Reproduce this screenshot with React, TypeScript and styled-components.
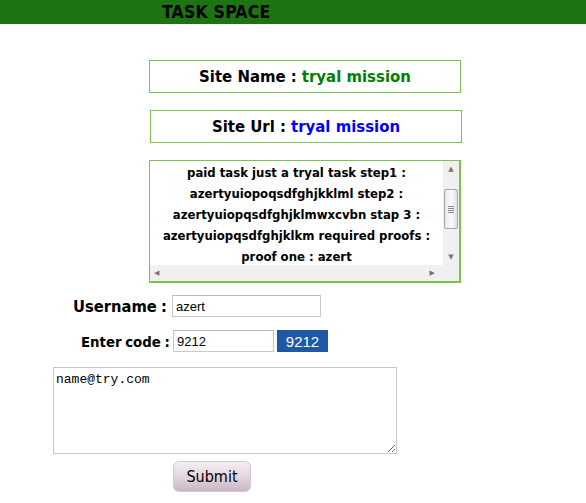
import styled, { createGlobalStyle } from "styled-components";

const GlobalStyle = createGlobalStyle`
  body {
    margin: 0;
    background: #ffffff;
    font-family: "DejaVu Sans", Verdana, sans-serif;
  }
`;

const Header = styled.div`
  height: 24px;
  background: #1c7510;
  padding-left: 162px;
  display: flex;
  align-items: center;
`;

const Title = styled.h1`
  margin: 0;
  font-family: "DejaVu Sans Condensed", "DejaVu Sans", sans-serif;
  font-size: 17.5px;
  font-weight: bold;
  color: #000;
  letter-spacing: 0.2px;
`;

const Main = styled.div`
  display: flex;
  flex-direction: column;
  align-items: flex-start;
  padding-top: 36px;
`;

const InfoBox = styled.div<{ $left: number; $gap: number }>`
  margin-left: ${(p) => p.$left}px;
  margin-bottom: ${(p) => p.$gap}px;
  width: 310px;
  height: 31px;
  border: 1px solid #7dc24a;
  display: flex;
  align-items: center;
  justify-content: center;
  font-family: "DejaVu Sans Condensed", "DejaVu Sans", sans-serif;
  font-size: 16.6px;
  font-weight: bold;
  color: #000;
`;

const Value = styled.span<{ $color: string }>`
  color: ${(p) => p.$color};
  margin-left: 5px;
`;

const ScrollBox = styled.div`
  margin-left: 149px;
  width: 309px;
  height: 120px;
  border: 2px solid #7dc24a;
  border-width: 1px 2px 2px 1px;
  display: grid;
  grid-template-columns: 1fr 16px;
  grid-template-rows: 1fr 16px;
  margin-bottom: 12px;
`;

const ScrollText = styled.div`
  overflow: hidden;
  text-align: center;
  font-family: "DejaVu Sans Condensed", "DejaVu Sans", sans-serif;
  font-size: 13px;
  font-weight: bold;
  line-height: 21px;
  padding-top: 1px;
  color: #000;
`;

const VBar = styled.div`
  background: #f0f0f0;
  display: flex;
  flex-direction: column;
  align-items: center;
`;

const HBar = styled.div`
  background: #f0f0f0;
  display: flex;
  align-items: center;
  justify-content: space-between;
  padding: 0 8px 0 4px;
`;

const Corner = styled.div`
  background: #f0f0f0;
`;

const Arrow = styled.div`
  height: 16px;
  display: flex;
  align-items: center;
  justify-content: center;
  color: #777;
  font-size: 7px;
`;

const Thumb = styled.div`
  margin-top: 12px;
  width: 12px;
  height: 38px;
  border: 1px solid #a7a7a7;
  border-radius: 2px;
  background: linear-gradient(to right, #e8e8e8, #fafafa 50%, #e0e0e0);
  display: flex;
  flex-direction: column;
  align-items: center;
  justify-content: center;
  gap: 1px;
  margin-bottom: auto;
`;

const Grip = styled.span`
  display: block;
  width: 6px;
  height: 1px;
  background: #8a8a8a;
`;

const FormRow = styled.div<{ $left: number }>`
  display: flex;
  align-items: center;
  margin-left: ${(p) => p.$left}px;
  margin-bottom: 13px;
`;

const Label = styled.label<{ $w: number; $size: number }>`
  width: ${(p) => p.$w}px;
  white-space: nowrap;
  font-family: "DejaVu Sans Condensed", "DejaVu Sans", sans-serif;
  font-size: ${(p) => p.$size}px;
  word-spacing: -1px;
  font-weight: bold;
  color: #000;
`;

const TextInput = styled.input<{ $w: number }>`
  width: ${(p) => p.$w}px;
  height: 22px;
  box-sizing: border-box;
  border: 1px solid #c9c9c9;
  border-top-color: #b8b8b8;
  padding: 0 3px;
  font-family: "Liberation Sans", Arial, sans-serif;
  font-size: 13px;
  color: #000;
  outline: none;
`;

const Captcha = styled.div`
  margin-left: 3px;
  width: 51px;
  height: 22px;
  background: #1f58a4;
  color: #fff;
  font-family: "Liberation Sans", Arial, sans-serif;
  font-size: 15px;
  display: flex;
  align-items: center;
  justify-content: center;
`;

const Message = styled.textarea`
  margin-left: 53px;
  margin-top: 2px;
  width: 344px;
  height: 87px;
  box-sizing: border-box;
  border: 1px solid #c8c8c8;
  padding: 4px 2px;
  font-family: "Liberation Mono", "Courier New", monospace;
  font-size: 13px;
  color: #000;
  outline: none;
`;

const SubmitButton = styled.button`
  margin-left: 173px;
  margin-top: 7px;
  width: 78px;
  height: 31px;
  border: 1px solid #d9c6d5;
  border-radius: 6px;
  background: linear-gradient(to bottom, #f3eef2, #e2d6df 50%, #c9b6c5);
  font-family: "DejaVu Sans Condensed", "DejaVu Sans", sans-serif;
  font-size: 16px;
  color: #000;
`;

const steps = [
  "paid task just a tryal task step1 :",
  "azertyuiopoqsdfghjkklml step2 :",
  "azertyuiopqsdfghjklmwxcvbn stap 3 :",
  "azertyuiopqsdfghjklkm required proofs :",
  "proof one : azert",
];

export default function App() {
  return (
    <>
      <GlobalStyle />
      <Header>
        <Title>TASK SPACE</Title>
      </Header>
      <Main>
        <InfoBox $left={149} $gap={17}>
          Site Name :<Value $color="#008000">tryal mission</Value>
        </InfoBox>
        <InfoBox $left={150} $gap={17}>
          Site Url :<Value $color="#0000ff">tryal mission</Value>
        </InfoBox>
        <ScrollBox>
          <ScrollText>
            {steps.map((s) => (
              <div key={s}>{s}</div>
            ))}
          </ScrollText>
          <VBar>
            <Arrow>▲</Arrow>
            <Thumb>
              <Grip />
              <Grip />
              <Grip />
              <Grip />
            </Thumb>
            <Arrow>▼</Arrow>
          </VBar>
          <HBar>
            <Arrow>◀</Arrow>
            <Arrow>▶</Arrow>
          </HBar>
          <Corner />
        </ScrollBox>
        <FormRow $left={73}>
          <Label $w={99} $size={16.4}>Username :</Label>
          <TextInput $w={149} defaultValue="azert" />
        </FormRow>
        <FormRow $left={81}>
          <Label $w={92} $size={14.8}>Enter code :</Label>
          <TextInput $w={101} defaultValue="9212" />
          <Captcha>9212</Captcha>
        </FormRow>
        <Message defaultValue="name@try.com" />
        <SubmitButton>Submit</SubmitButton>
      </Main>
    </>
  );
}
